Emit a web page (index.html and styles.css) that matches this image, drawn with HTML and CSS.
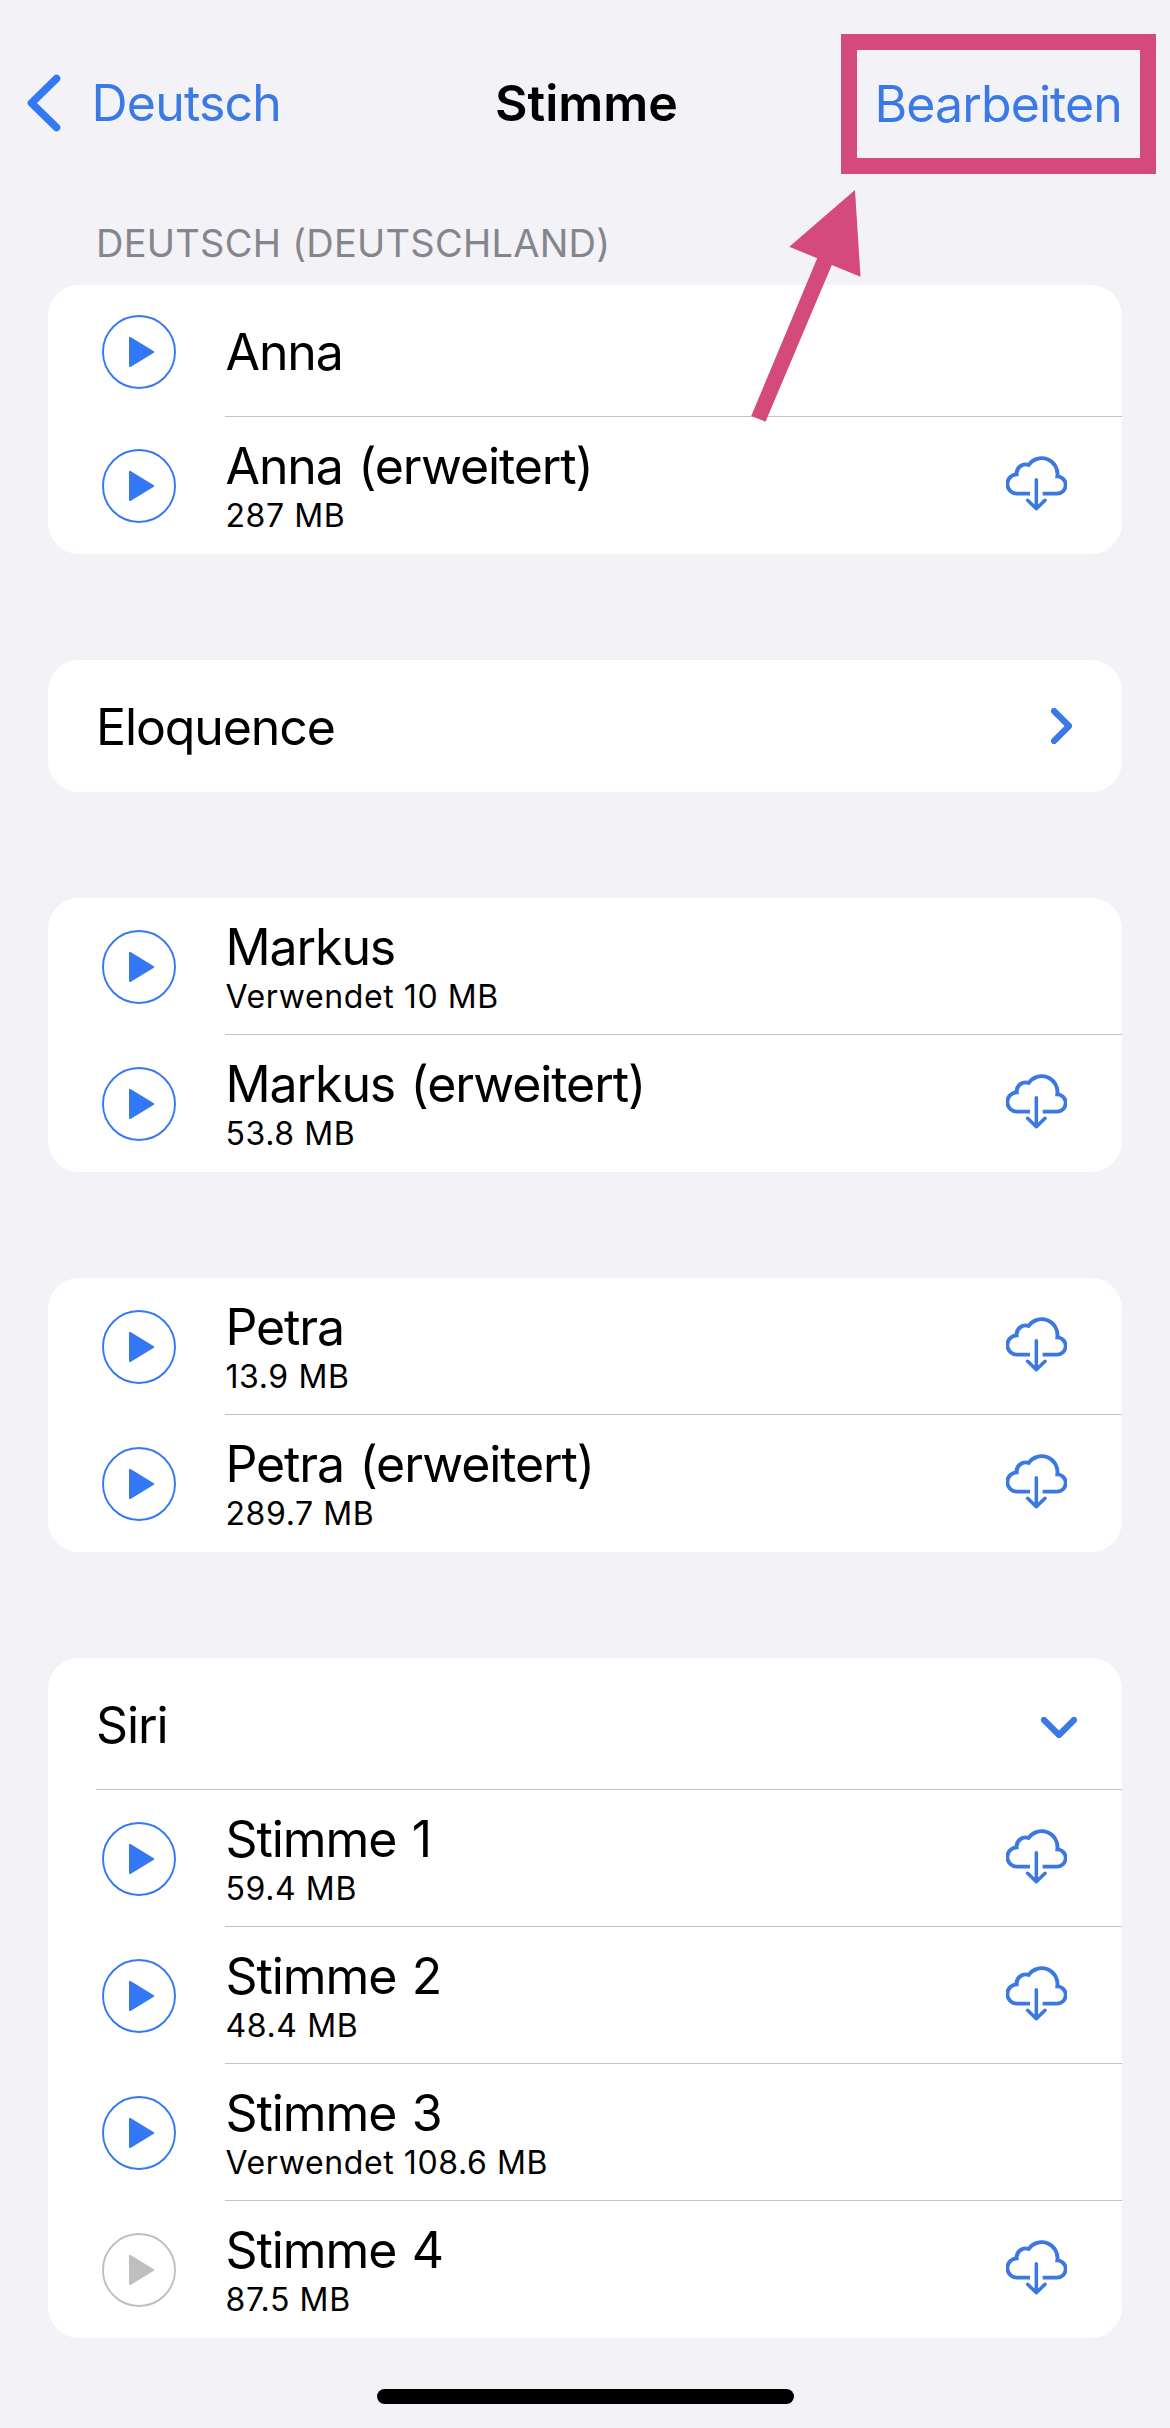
FILE: index.html
```html
<!DOCTYPE html>
<html lang="de">
<head>
<meta charset="utf-8">
<title>Stimme</title>
<link rel="stylesheet" href="styles.css">
</head>
<body>
<svg class="sprite" aria-hidden="true">
  <symbol id="play" viewBox="0 0 74 74">
    <circle cx="37" cy="37" r="36" fill="none" stroke="currentColor" stroke-width="1.9"/>
    <path d="M28 22.9V51.1L51.3 37Z" fill="currentColor" stroke="currentColor" stroke-width="2" stroke-linejoin="round"/>
  </symbol>
  <symbol id="cloud" viewBox="108 107 183 168">
    <g fill="none" stroke="currentColor" stroke-linejoin="miter">
      <path stroke-width="11.6" d="M180 223H142A29 29 0 0 1 140 165A27 27 0 0 1 176 137A47.5 47.5 0 0 1 262 171A26 26 0 0 1 260 223H218"/>
      <path stroke-width="10.6" stroke-linecap="round" stroke-linejoin="round" d="M199 181V267M173 243L199 268L225 243"/>
    </g>
  </symbol>
</svg>
<div class="screen">
  <header class="nav">
    <a class="back"><svg class="back-icon" viewBox="0 0 34 58"><path d="M29.5 4.5L4.5 29L29.5 53.5"/></svg><span class="back-label">Deutsch</span></a>
    <h1 class="title">Stimme</h1>
    <a class="edit">Bearbeiten</a>
  </header>
  <h2 class="section">DEUTSCH (DEUTSCHLAND)</h2>
  <main class="groups">
    <section class="group">
      <div class="row short"><svg class="play"><use href="#play"/></svg><div class="text"><p class="name">Anna</p></div></div>
      <div class="row"><svg class="play"><use href="#play"/></svg><div class="text"><p class="name">Anna (erweitert)</p><p class="size">287 MB</p></div><svg class="cloud"><use href="#cloud"/></svg></div>
    </section>
    <section class="group">
      <div class="row short plain"><p class="name">Eloquence</p><svg class="chevron right" viewBox="0 0 21 36"><path d="M3 3L18 18L3 33"/></svg></div>
    </section>
    <section class="group">
      <div class="row"><svg class="play"><use href="#play"/></svg><div class="text"><p class="name">Markus</p><p class="size">Verwendet 10 MB</p></div></div>
      <div class="row"><svg class="play"><use href="#play"/></svg><div class="text"><p class="name">Markus (erweitert)</p><p class="size">53.8 MB</p></div><svg class="cloud"><use href="#cloud"/></svg></div>
    </section>
    <section class="group">
      <div class="row"><svg class="play"><use href="#play"/></svg><div class="text"><p class="name">Petra</p><p class="size">13.9 MB</p></div><svg class="cloud"><use href="#cloud"/></svg></div>
      <div class="row"><svg class="play"><use href="#play"/></svg><div class="text"><p class="name">Petra (erweitert)</p><p class="size">289.7 MB</p></div><svg class="cloud"><use href="#cloud"/></svg></div>
    </section>
    <section class="group">
      <div class="row short plain"><p class="name">Siri</p><svg class="chevron down" viewBox="0 0 36 21"><path d="M3 3L18 18L33 3"/></svg></div>
      <div class="row"><svg class="play"><use href="#play"/></svg><div class="text"><p class="name">Stimme 1</p><p class="size">59.4 MB</p></div><svg class="cloud"><use href="#cloud"/></svg></div>
      <div class="row"><svg class="play"><use href="#play"/></svg><div class="text"><p class="name">Stimme 2</p><p class="size">48.4 MB</p></div><svg class="cloud"><use href="#cloud"/></svg></div>
      <div class="row"><svg class="play"><use href="#play"/></svg><div class="text"><p class="name">Stimme 3</p><p class="size">Verwendet 108.6 MB</p></div></div>
      <div class="row"><svg class="play disabled"><use href="#play"/></svg><div class="text"><p class="name">Stimme 4</p><p class="size">87.5 MB</p></div><svg class="cloud"><use href="#cloud"/></svg></div>
    </section>
  </main>
  <div class="home-bar"></div>
  <div class="highlight"></div>
  <svg class="arrow" viewBox="750 189 112 235"><path d="M855 190L860.5 276.7L831.8 265L765.5 421.7L751.2 416L817.2 258.3L789.3 246.7Z"/></svg>
</div>
</body>
</html>
```
FILE: styles.css
```css
* { box-sizing: border-box; margin: 0; padding: 0; }
body { background: #f2f2f7; font-family: Inter, "Liberation Sans", sans-serif; color: #000; }
.sprite { position: absolute; width: 0; height: 0; }
.screen { position: relative; width: 1170px; height: 2428px; overflow: hidden; display: flex; flex-direction: column; }

.nav { height: 205px; padding: 0 48px 0 27px; display: grid; grid-template-columns: 468px 1fr auto; align-items: center; font-size: 50px; line-height: 60px; }
.back { display: flex; align-items: center; gap: 30.5px; color: #3b7ae6; }
.back-icon { width: 34px; height: 58px; fill: none; stroke: #3478f6; stroke-width: 7.6; stroke-linecap: round; stroke-linejoin: round; }
.back-label { letter-spacing: -0.8px; }
.title { font-size: 50px; font-weight: 600; letter-spacing: 0; }
.edit { color: #3b7ae6; letter-spacing: -0.9px; padding-top: 2px; }

.section { height: 80px; padding: 13px 0 0 96px; font-size: 38px; line-height: 50px; font-weight: 400; color: #86858b; letter-spacing: 0.25px; }

.groups { display: flex; flex-direction: column; gap: 106px; padding: 0 48px; }
.group { background: #fff; border-radius: 31px; }
.row { height: 137px; padding: 0 55px 0 54px; display: flex; align-items: center; position: relative; }
.row.short { height: 132px; }
.row.plain { padding-left: 48px; justify-content: space-between; }
.row:not(:last-child)::after { content: ""; position: absolute; left: 177px; right: 0; bottom: 0; height: 1px; background: #c3c3c5; }
.row.plain:not(:last-child)::after { left: 48px; }
.play { width: 74px; height: 74px; margin-top: 1px; flex: none; color: #3478f6; }
.play.disabled { color: #bfbfbf; }
.text { flex: 1; margin-left: 49.5px; }
.name { font-size: 50px; line-height: 60px; letter-spacing: -1.1px; word-spacing: 2.5px; padding-top: 1px; white-space: nowrap; }
.size { font-size: 32px; line-height: 40px; letter-spacing: 0.6px; }
.cloud { width: 61px; height: 56px; margin-top: -5px; flex: none; color: #3b78e2; }
.chevron { fill: none; stroke: #3b78e8; stroke-width: 6.2; stroke-linecap: round; stroke-linejoin: round; }
.chevron.right { width: 21px; height: 36px; margin-right: -5px; }
.chevron.down { width: 36px; height: 21px; margin: 6px -10px 0 0; }

.home-bar { width: 417px; height: 15px; margin: 51px auto 0; border-radius: 8px; background: #000; }

.highlight { position: absolute; left: 841px; top: 34px; width: 315px; height: 140px; border: 16px solid #d44a7a; }
.arrow { position: absolute; left: 750px; top: 189px; width: 112px; height: 235px; fill: #d44a7a; }
```
